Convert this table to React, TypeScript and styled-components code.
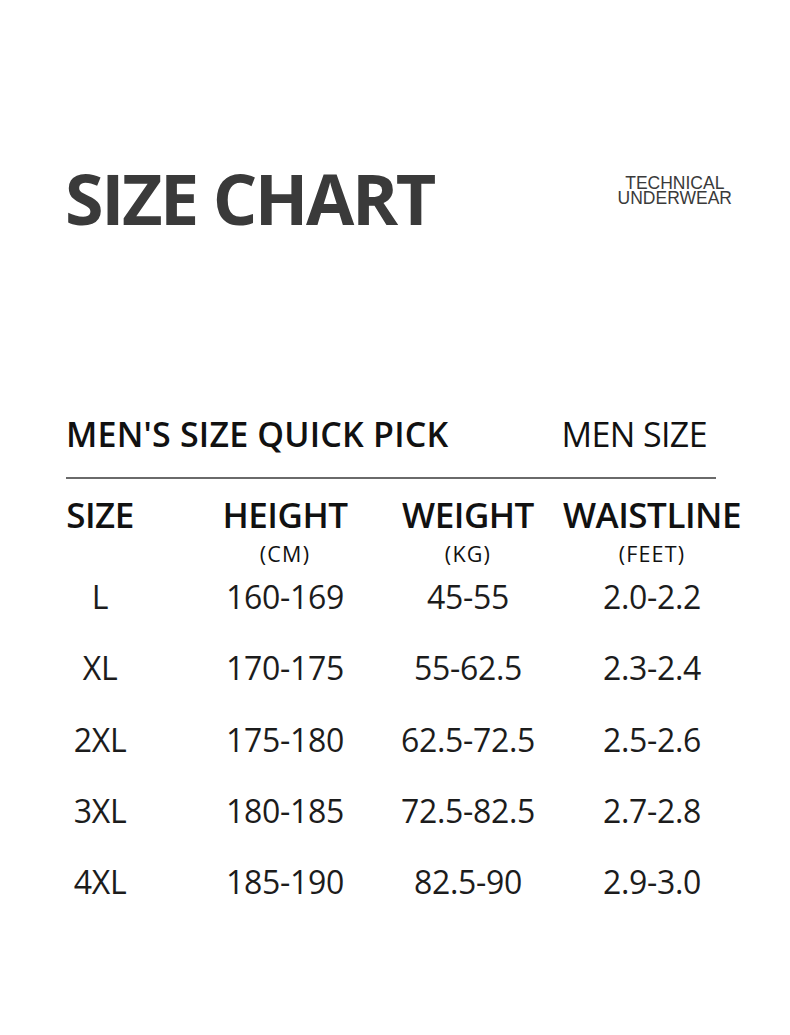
import React from 'react';
import styled, { createGlobalStyle } from 'styled-components';

const GlobalStyle = createGlobalStyle`
  html, body {
    margin: 0;
    padding: 0;
    background: #ffffff;
  }
  body {
    font-family: 'Open Sans', 'Liberation Sans', sans-serif;
  }
`;

const Page = styled.div`
  width: 790px;
  height: 1035px;
  background: #ffffff;
  box-sizing: border-box;
  padding-top: 163px;
  overflow: hidden;
`;

const Header = styled.header`
  display: flex;
  justify-content: space-between;
  align-items: flex-start;
  padding: 0 58px 0 65px;
`;

const Title = styled.h1`
  margin: 0;
  font-family: 'Open Sans', sans-serif;
  font-weight: 700;
  font-size: 70px;
  line-height: 1;
  color: #3a3a3a;
  letter-spacing: -2.4px;
`;

const Brand = styled.div`
  margin-top: 13px;
  font-family: 'Liberation Sans', sans-serif;
  font-size: 17.5px;
  line-height: 15px;
  color: #3a3a3a;
  text-align: center;
`;

const QuickPick = styled.div`
  display: flex;
  justify-content: space-between;
  align-items: baseline;
  margin: 184px 83px 0 66px;
`;

const SectionTitle = styled.span<{ $light?: boolean }>`
  font-family: 'Open Sans', sans-serif;
  font-weight: ${p => (p.$light ? 400 : 600)};
  font-size: 34px;
  line-height: 1;
  letter-spacing: ${p => (p.$light ? '-0.6px' : '0.2px')};
  color: #111111;
`;

const Rule = styled.hr`
  margin: 26px 74px 0 66px;
  border: none;
  height: 2px;
  background: #6a6a6a;
`;

const Table = styled.div`
  display: grid;
  grid-template-columns: 180px 190px 176px 192px;
  grid-template-rows: 48px 22px repeat(5, 71.25px);
  margin: 12px 0 0 10px;
  font-family: 'Open Sans', sans-serif;
  color: #151515;
`;

const Cell = styled.div<{ $kind: 'head' | 'unit' | 'data' }>`
  display: flex;
  justify-content: center;
  align-self: start;
  white-space: nowrap;
  font-size: ${p => (p.$kind === 'head' ? '35px' : p.$kind === 'unit' ? '21.5px' : '32px')};
  font-weight: ${p => (p.$kind === 'head' ? 600 : 400)};
  letter-spacing: ${p => (p.$kind === 'data' ? '-0.3px' : p.$kind === 'unit' ? '1.2px' : '-0.5px')};
  line-height: ${p => (p.$kind === 'head' ? '48px' : p.$kind === 'unit' ? '29px' : '71.25px')};
  color: ${p => (p.$kind === 'data' ? '#1c1c1c' : '#111111')};
`;

const columns = [
  { head: 'SIZE', unit: '' },
  { head: 'HEIGHT', unit: '(CM)' },
  { head: 'WEIGHT', unit: '(KG)' },
  { head: 'WAISTLINE', unit: '(FEET)' },
];

const rows = [
  ['L', '160-169', '45-55', '2.0-2.2'],
  ['XL', '170-175', '55-62.5', '2.3-2.4'],
  ['2XL', '175-180', '62.5-72.5', '2.5-2.6'],
  ['3XL', '180-185', '72.5-82.5', '2.7-2.8'],
  ['4XL', '185-190', '82.5-90', '2.9-3.0'],
];

export default function App() {
  return (
    <Page>
      <GlobalStyle />
      <Header>
        <Title>SIZE CHART</Title>
        <Brand>
          TECHNICAL
          <br />
          UNDERWEAR
        </Brand>
      </Header>

      <QuickPick>
        <SectionTitle>MEN'S SIZE QUICK PICK</SectionTitle>
        <SectionTitle $light>MEN SIZE</SectionTitle>
      </QuickPick>
      <Rule />

      <Table>
        {columns.map(c => (
          <Cell key={c.head} $kind="head">{c.head}</Cell>
        ))}
        {columns.map(c => (
          <Cell key={c.head + '-unit'} $kind="unit">{c.unit}</Cell>
        ))}
        {rows.map(r =>
          r.map((v, i) => (
            <Cell key={r[0] + i} $kind="data">{v}</Cell>
          ))
        )}
      </Table>
    </Page>
  );
}
